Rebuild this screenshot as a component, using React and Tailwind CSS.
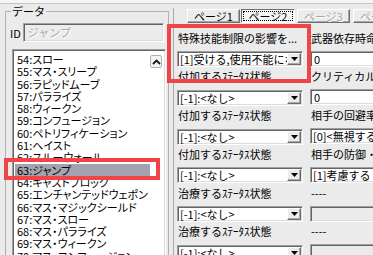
import React from 'react';

const FONT = "font-['Noto_Sans_CJK_JP','Noto_Sans',sans-serif]";
const SUNKEN = 'border border-t-[#a0a0a0] border-l-[#a0a0a0] border-b-white border-r-white shadow-[inset_1px_1px_0_#646464,inset_-1px_-1px_0_#dcdcdc]';
const RAISED = 'border border-t-white border-l-white border-b-[#6e6e6e] border-r-[#6e6e6e] shadow-[inset_-1px_-1px_0_#a8a8a8]';

const ITEMS = [
    '54:スロー', '55:マス・スリープ', '56:ラピッドムーブ', '57:パラライズ', '58:ウィークン',
    '59:コンフュージョン', '60:ペトリフィケーション', '61:ヘイスト', '62:スルーウォール', '63:ジャンプ',
    '64:キャストブロック', '65:エンチャンテッドウェポン', '66:マス・マジックシールド', '67:マス・スロー',
    '68:マス・パラライズ', '69:マス・ウィークン', '70:マス・コンフュージョン',
];

const ROWS = [
    { label: '特殊技能制限の影響を...', combo: '[1]受ける,使用不能にな', rLabel: '武器依存時命中率', right: { kind: 'text', text: '0' } },
    { label: '付加するｽﾃｰﾀｽ状態', combo: '[-1]:<なし>', rLabel: 'クリティカル率[%]', right: { kind: 'text', text: '0' } },
    { label: '付加するｽﾃｰﾀｽ状態', combo: '[-1]:<なし>', rLabel: '相手の回避率を', right: { kind: 'combo', text: '[0]<無視する>' } },
    { label: '付加するｽﾃｰﾀｽ状態', combo: '[-1]:<なし>', rLabel: '相手の防御・精神', right: { kind: 'combo', text: '[1]考慮する' } },
    { label: '治療するｽﾃｰﾀｽ状態', combo: '[-1]:<なし>', rLabel: '----', right: { kind: 'off' } },
    { label: '治療するｽﾃｰﾀｽ状態', combo: '[-1]:<なし>', rLabel: '----', right: { kind: 'off' } },
];

function DropButton() {
    return (
        <div className={`shrink-0 w-[14px] h-[12px] mr-[1px] bg-[#ececec] ${RAISED} flex items-center justify-center`}>
            <svg width="7" height="4" viewBox="0 0 7 4">
                <polygon points="0,0 7,0 3.5,4" fill="#000" />
            </svg>
        </div>
    );
}

function Combo({ text, button = true }) {
    return (
        <div className={`h-[16px] bg-white ${SUNKEN} flex items-center`}>
            <span className="flex-1 min-w-0 overflow-hidden whitespace-nowrap pl-[2px] text-[11px] leading-[14px]">{text}</span>
            {button && <DropButton />}
        </div>
    );
}

function Tab({ label, state, className }) {
    if (state === 'on') {
        return (
            <div className={`h-[14px] ${className} bg-[#f7f7f7] border border-t-[#6e6e6e] border-l-[#6e6e6e] border-b-white border-r-white flex items-center justify-center p-[1px]`}>
                <div className="w-full h-full border border-dotted border-black flex items-center justify-center text-[11px] leading-[10px]">{label}</div>
            </div>
        );
    }
    return (
        <div className={`h-[14px] ${className} bg-[#ececec] ${RAISED} flex items-center justify-center text-[11px] leading-[12px] ${state === 'off' ? 'text-[#a6a6a6] [text-shadow:1px_1px_0_#fff]' : ''}`}>
            {label}
        </div>
    );
}

export default function App() {
    return (
        <div className={`relative w-[373px] h-[255px] overflow-hidden bg-[#ebebeb] text-black ${FONT}`}>
            <div className="h-[4px] bg-[#f6f6f6] border-b border-[#c4c4c4]" />

            <div className="flex">
                {/* left: データ */}
                <div className="w-[173px] shrink-0 pt-[1px]">
                    <fieldset className="ml-[5px] w-[164px] h-[260px] border border-[#b0b0b0]">
                        <legend className="ml-[5px] px-[1px] text-[11px] leading-[12px]">データ</legend>
                        <div className="mt-[6px] flex items-center h-[19px]">
                            <span className="pl-[4px] text-[11px] leading-[12px]">ID</span>
                            <div className={`ml-[2px] w-[141px] h-[19px] bg-[#ececec] ${SUNKEN} flex items-center pl-[4px] text-[11px] text-[#a8a8a8] [text-shadow:1px_1px_0_#fff]`}>
                                ジャンプ
                            </div>
                        </div>
                        <div className={`mt-[7px] ml-[6px] w-[154px] h-[220px] bg-white ${SUNKEN} flex p-[2px]`}>
                            <div className="flex-1 min-w-0 pt-[1px]">
                                {ITEMS.map((it) => (
                                    <div
                                        key={it}
                                        className={`h-[12.3px] leading-[12.3px] pl-[2px] text-[11px] whitespace-nowrap [font-feature-settings:'palt'] ${it === '63:ジャンプ' ? 'bg-[#a3a3b0]' : ''}`}
                                    >
                                        {it}
                                    </div>
                                ))}
                            </div>
                            <div className="w-[13px] shrink-0 pt-[3px]">
                                <div className="w-[12px] h-[13px] rounded-[2px] border border-[#a9b1c2] bg-[#f3f3f3] flex items-center justify-center">
                                    <svg width="9" height="6" viewBox="0 0 9 6">
                                        <polyline points="1,5 4.5,1.5 8,5" fill="none" stroke="#1a1a1a" strokeWidth="1.8" />
                                    </svg>
                                </div>
                            </div>
                        </div>
                    </fieldset>
                </div>

                {/* right: tab pages */}
                <div className="flex-1 mt-[4px] border-l border-[#a8a8a8] h-[260px]">
                    <div className="flex mt-[1px] ml-[13px]">
                        <Tab label="ページ1" state="idle" className="w-[53px] shrink-0" />
                        <Tab label="ページ2" state="on" className="w-[54px] ml-[1px] shrink-0" />
                        <Tab label="ページ3" state="off" className="w-[53px] ml-[2px] shrink-0" />
                        <Tab label="ページ4" state="off" className="w-[53px] ml-[3px] shrink-0" />
                    </div>
                    <div className="mt-[8.5px] pl-[3px]">
                        {ROWS.map((r, i) => (
                            <div key={i} className="h-[38.8px] flex gap-[7px]">
                                <div className="w-[126px] shrink-0">
                                    <div className="h-[13px] leading-[13px] pl-[1px] text-[11px] whitespace-nowrap">{r.label}</div>
                                    <div className="mt-[6.5px]">
                                        <Combo text={r.combo} />
                                    </div>
                                </div>
                                <div className="w-[120px] shrink-0">
                                    <div className="h-[13px] leading-[13px] pl-[1px] text-[11px] whitespace-nowrap">{r.rLabel}</div>
                                    <div className="mt-[6px]">
                                        {r.right.kind === 'text' && (
                                            <div className={`h-[16px] bg-white ${SUNKEN} pl-[3px] text-[11px] leading-[14px]`}>{r.right.text}</div>
                                        )}
                                        {r.right.kind === 'combo' && <Combo text={r.right.text} />}
                                        {r.right.kind === 'off' && <div className={`h-[16px] bg-[#ebebeb] ${SUNKEN}`} />}
                                    </div>
                                </div>
                            </div>
                        ))}
                    </div>
                </div>
            </div>

            {/* red annotation frames */}
            <div className="absolute left-[4px] top-[158px] w-[156px] h-[22px] border-[4px] border-[#ef4549]" />
            <div className="absolute left-[167px] top-[24px] w-[144px] h-[59px] border-[4px] border-[#ef4549]" />
        </div>
    );
}
